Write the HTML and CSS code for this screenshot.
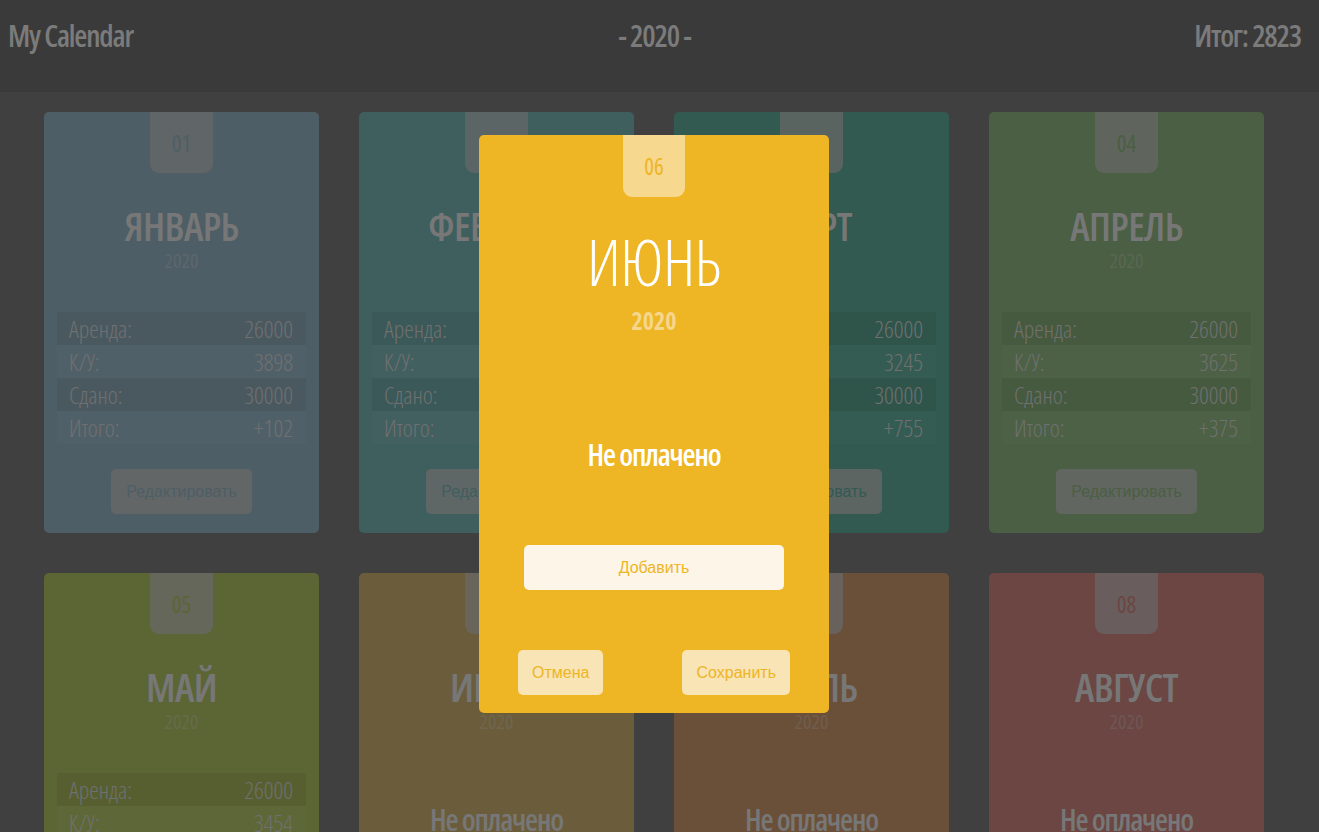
FILE: index.html
```html
<!DOCTYPE html>
<html lang="ru">
<head>
<meta charset="utf-8">
<title>My Calendar</title>
<link rel="stylesheet" href="styles.css">
</head>
<body>
<header class="topbar">
  <div class="brand">My Calendar</div>
  <div class="year-nav">- 2020 -</div>
  <div class="total">Итог: 2823</div>
</header>

<main class="grid">
  <section class="card c-jan">
    <div class="tab">01</div>
    <h2 class="month">ЯНВАРЬ</h2>
    <div class="year">2020</div>
    <div class="table">
      <div class="row"><span>Аренда:</span><span>26000</span></div>
      <div class="row"><span>К/У:</span><span>3898</span></div>
      <div class="row"><span>Сдано:</span><span>30000</span></div>
      <div class="row"><span>Итого:</span><span>+102</span></div>
    </div>
    <button class="edit">Редактировать</button>
  </section>

  <section class="card c-feb">
    <div class="tab">02</div>
    <h2 class="month">ФЕВРАЛЬ</h2>
    <div class="year">2020</div>
    <div class="table">
      <div class="row"><span>Аренда:</span><span>26000</span></div>
      <div class="row"><span>К/У:</span><span>3514</span></div>
      <div class="row"><span>Сдано:</span><span>30000</span></div>
      <div class="row"><span>Итого:</span><span>+486</span></div>
    </div>
    <button class="edit">Редактировать</button>
  </section>

  <section class="card c-mar">
    <div class="tab">03</div>
    <h2 class="month">МАРТ</h2>
    <div class="year">2020</div>
    <div class="table">
      <div class="row"><span>Аренда:</span><span>26000</span></div>
      <div class="row"><span>К/У:</span><span>3245</span></div>
      <div class="row"><span>Сдано:</span><span>30000</span></div>
      <div class="row"><span>Итого:</span><span>+755</span></div>
    </div>
    <button class="edit">Редактировать</button>
  </section>

  <section class="card c-apr">
    <div class="tab">04</div>
    <h2 class="month">АПРЕЛЬ</h2>
    <div class="year">2020</div>
    <div class="table">
      <div class="row"><span>Аренда:</span><span>26000</span></div>
      <div class="row"><span>К/У:</span><span>3625</span></div>
      <div class="row"><span>Сдано:</span><span>30000</span></div>
      <div class="row"><span>Итого:</span><span>+375</span></div>
    </div>
    <button class="edit">Редактировать</button>
  </section>

  <section class="card c-may">
    <div class="tab">05</div>
    <h2 class="month">МАЙ</h2>
    <div class="year">2020</div>
    <div class="table">
      <div class="row"><span>Аренда:</span><span>26000</span></div>
      <div class="row"><span>К/У:</span><span>3454</span></div>
      <div class="row"><span>Сдано:</span><span>30000</span></div>
      <div class="row"><span>Итого:</span><span>+546</span></div>
    </div>
    <button class="edit">Редактировать</button>
  </section>

  <section class="card c-jun">
    <div class="tab">06</div>
    <h2 class="month">ИЮНЬ</h2>
    <div class="year">2020</div>
    <div class="unpaid">Не оплачено</div>
  </section>

  <section class="card c-jul">
    <div class="tab">07</div>
    <h2 class="month">ИЮЛЬ</h2>
    <div class="year">2020</div>
    <div class="unpaid">Не оплачено</div>
  </section>

  <section class="card c-aug">
    <div class="tab">08</div>
    <h2 class="month">АВГУСТ</h2>
    <div class="year">2020</div>
    <div class="unpaid">Не оплачено</div>
  </section>
</main>

<div class="modal">
  <div class="modal-tab">06</div>
  <h2 class="modal-month">ИЮНЬ</h2>
  <div class="modal-year">2020</div>
  <div class="modal-status">Не оплачено</div>
  <button class="add">Добавить</button>
  <div class="modal-actions">
    <button class="act">Отмена</button>
    <button class="act">Сохранить</button>
  </div>
</div>
</body>
</html>
```

FILE: styles.css
```css
* { box-sizing: border-box; }

html, body {
  margin: 0;
  padding: 0;
  background: #404040;
  height: 100%;
  overflow: hidden;
}

body {
  font-family: "Open Sans", "DejaVu Sans", sans-serif;
  font-stretch: 75%;
}

.topbar {
  height: 92px;
  background: #3a3a3a;
  display: grid;
  grid-template-columns: 1fr auto 1fr;
  align-items: start;
  padding: 14px 18px 0 8px;
  color: #7b7b7b;
  font-size: 30px;
  font-weight: 560;
  line-height: 44px;
  letter-spacing: -1.2px;
}

.brand { justify-self: start; }
.year-nav { justify-self: center; }
.total { justify-self: end; }

.grid {
  display: grid;
  grid-template-columns: repeat(4, 275px);
  column-gap: 40px;
  row-gap: 40px;
  padding: 20px 0 0 44px;
}

.card {
  --c: #4e5e66;
  background: var(--c);
  border-radius: 5px;
  display: flex;
  flex-direction: column;
  align-items: center;
  padding-bottom: 19px;
  min-height: 421px;
}

.c-jan { --c: #4e5e66; }
.c-feb { --c: #3f5e5e; }
.c-mar { --c: #325a50; }
.c-apr { --c: #4a5f43; }
.c-may { --c: #5c6534; }
.c-jun { --c: #6b5d3b; }
.c-jul { --c: #6b5039; }
.c-aug { --c: #6b4642; }

.tab {
  width: 63px;
  height: 61px;
  background: rgba(104, 104, 104, 0.72);
  border-radius: 0 0 9px 9px;
  display: flex;
  align-items: center;
  justify-content: center;
  color: var(--c);
  font-size: 23px;
  font-weight: 400;
}

.month {
  margin: 33px 0 0;
  font-size: 40px;
  line-height: 40px;
  font-weight: 580;
  letter-spacing: -0.6px;
  color: #777777;
}

.year {
  margin-top: 5px;
  font-size: 20px;
  line-height: 20px;
  color: rgba(120, 120, 120, 0.35);
  font-weight: 400;
}

.table {
  margin-top: 41px;
  width: 249px;
  display: flex;
  flex-direction: column;
}

.row {
  height: 33px;
  display: flex;
  justify-content: space-between;
  align-items: center;
  padding: 0 13px 0 12px;
  color: #707070;
  font-size: 24px;
  font-weight: 300;
}

.row:nth-child(odd) { background: rgba(0, 0, 0, 0.05); }
.row:nth-child(even) { background: rgba(255, 255, 255, 0.015); }

.edit {
  margin-top: 25px;
  width: 141px;
  height: 45px;
  border: none;
  border-radius: 5px;
  background: rgba(104, 104, 104, 0.8);
  color: var(--c);
  font-family: "Liberation Sans", Arial, sans-serif;
  font-size: 16px;
  font-stretch: normal;
}

.unpaid {
  margin-top: 73px;
  font-size: 30px;
  line-height: 30px;
  font-weight: 560;
  letter-spacing: -1.2px;
  color: #777777;
}

.modal {
  position: fixed;
  left: 479px;
  top: 135px;
  width: 350px;
  height: 578px;
  background: #eeb525;
  border-radius: 5px;
  display: flex;
  flex-direction: column;
  align-items: center;
}

.modal-tab {
  width: 62px;
  height: 62px;
  background: #f6d88f;
  border-radius: 0 0 9px 9px;
  display: flex;
  align-items: center;
  justify-content: center;
  color: #eeb525;
  font-size: 23px;
}

.modal-month {
  margin: 33px 0 0;
  font-size: 64px;
  line-height: 64px;
  font-weight: 360;
  letter-spacing: -0.5px;
  color: #ffffff;
}

.modal-year {
  margin-top: 15px;
  font-size: 24px;
  line-height: 24px;
  font-weight: 700;
  color: #f5d68a;
}

.modal-status {
  margin-top: 107px;
  font-size: 30px;
  line-height: 30px;
  font-weight: 560;
  letter-spacing: -1.2px;
  color: #ffffff;
}

.add {
  margin-top: 75px;
  width: 260px;
  height: 45px;
  border: none;
  border-radius: 5px;
  background: #fdf6e8;
  color: #eeb525;
  font-family: "Liberation Sans", Arial, sans-serif;
  font-size: 16px;
}

.modal-actions {
  margin-top: 60px;
  width: 100%;
  padding: 0 39px;
  display: flex;
  justify-content: space-between;
}

.act {
  height: 45px;
  padding: 0 14px;
  border: none;
  border-radius: 5px;
  background: #f8e4b5;
  color: #eeb525;
  font-family: "Liberation Sans", Arial, sans-serif;
  font-size: 16px;
}
```
